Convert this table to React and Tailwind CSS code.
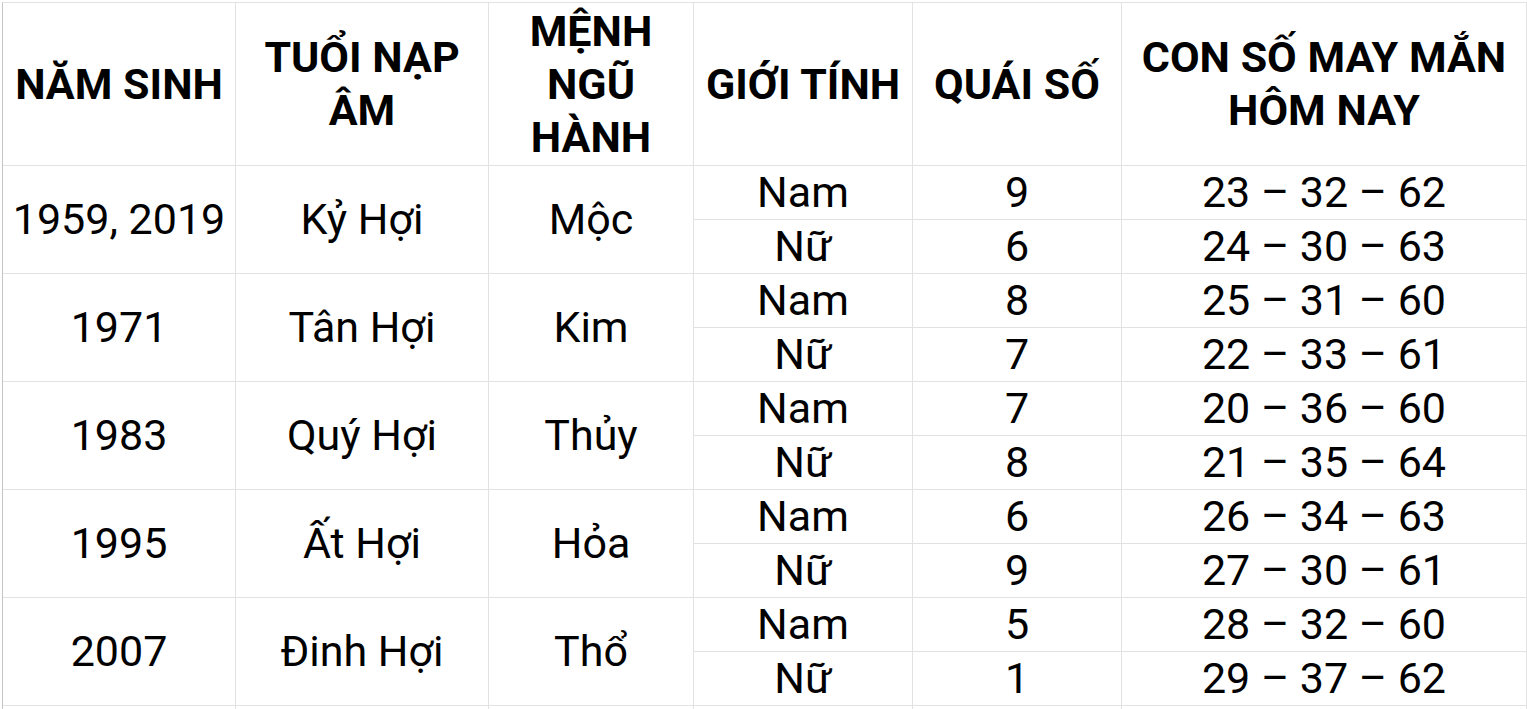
import React from "react";

const groups = [
  { year: "1959, 2019", tuoi: "Kỷ Hợi", menh: "Mộc", rows: [["Nam", "9", "23 – 32 – 62"], ["Nữ", "6", "24 – 30 – 63"]] },
  { year: "1971", tuoi: "Tân Hợi", menh: "Kim", rows: [["Nam", "8", "25 – 31 – 60"], ["Nữ", "7", "22 – 33 – 61"]] },
  { year: "1983", tuoi: "Quý Hợi", menh: "Thủy", rows: [["Nam", "7", "20 – 36 – 60"], ["Nữ", "8", "21 – 35 – 64"]] },
  { year: "1995", tuoi: "Ất Hợi", menh: "Hỏa", rows: [["Nam", "6", "26 – 34 – 63"], ["Nữ", "9", "27 – 30 – 61"]] },
  { year: "2007", tuoi: "Đinh Hợi", menh: "Thổ", rows: [["Nam", "5", "28 – 32 – 60"], ["Nữ", "1", "29 – 37 – 62"]] },
];

const cell = "border-r border-b border-[#e2e2e2] flex items-center justify-center text-center whitespace-nowrap";

export default function App() {
  return (
    <div className="w-[1527px] h-[709px] overflow-hidden bg-white pl-[2px] pt-[2px] text-black" style={{ fontFamily: "Roboto, 'Noto Sans', sans-serif" }}>
      <div className="grid grid-cols-[233px_253px_205px_219px_209px_405px] grid-rows-[163px_repeat(11,54px)] border-l border-t border-l-[#c4c4c4] border-t-[#e2e2e2]">
        {["NĂM SINH", ["TUỔI NẠP", "ÂM"], ["MỆNH", "NGŨ", "HÀNH"], "GIỚI TÍNH", "QUÁI SỐ", ["CON SỐ MAY MẮN", "HÔM NAY"]].map((h, i) => (
          <div key={i} className={`${cell} flex-col font-bold text-[43px] leading-[53px]`}>
            {Array.isArray(h) ? h.map((l) => <div key={l}>{l}</div>) : <div>{h}</div>}
          </div>
        ))}
        {groups.map((g) => (
          <React.Fragment key={g.year}>
            <div className={`${cell} row-span-2 text-[43px]`}>{g.year}</div>
            <div className={`${cell} row-span-2 text-[43px]`}>{g.tuoi}</div>
            <div className={`${cell} row-span-2 text-[43px]`}>{g.menh}</div>
            {g.rows.map((r, j) => (
              <React.Fragment key={j}>
                <div className={`${cell} text-[43px] ${j === 1 ? "col-start-4" : ""}`}>{r[0]}</div>
                <div className={`${cell} text-[43px]`}>{r[1]}</div>
                <div className={`${cell} text-[43px]`}>{r[2]}</div>
              </React.Fragment>
            ))}
          </React.Fragment>
        ))}
        <div className={cell}></div>
        <div className={cell}></div>
        <div className={cell}></div>
        <div className={cell}></div>
        <div className={cell}></div>
        <div className={cell}></div>
      </div>
    </div>
  );
}
